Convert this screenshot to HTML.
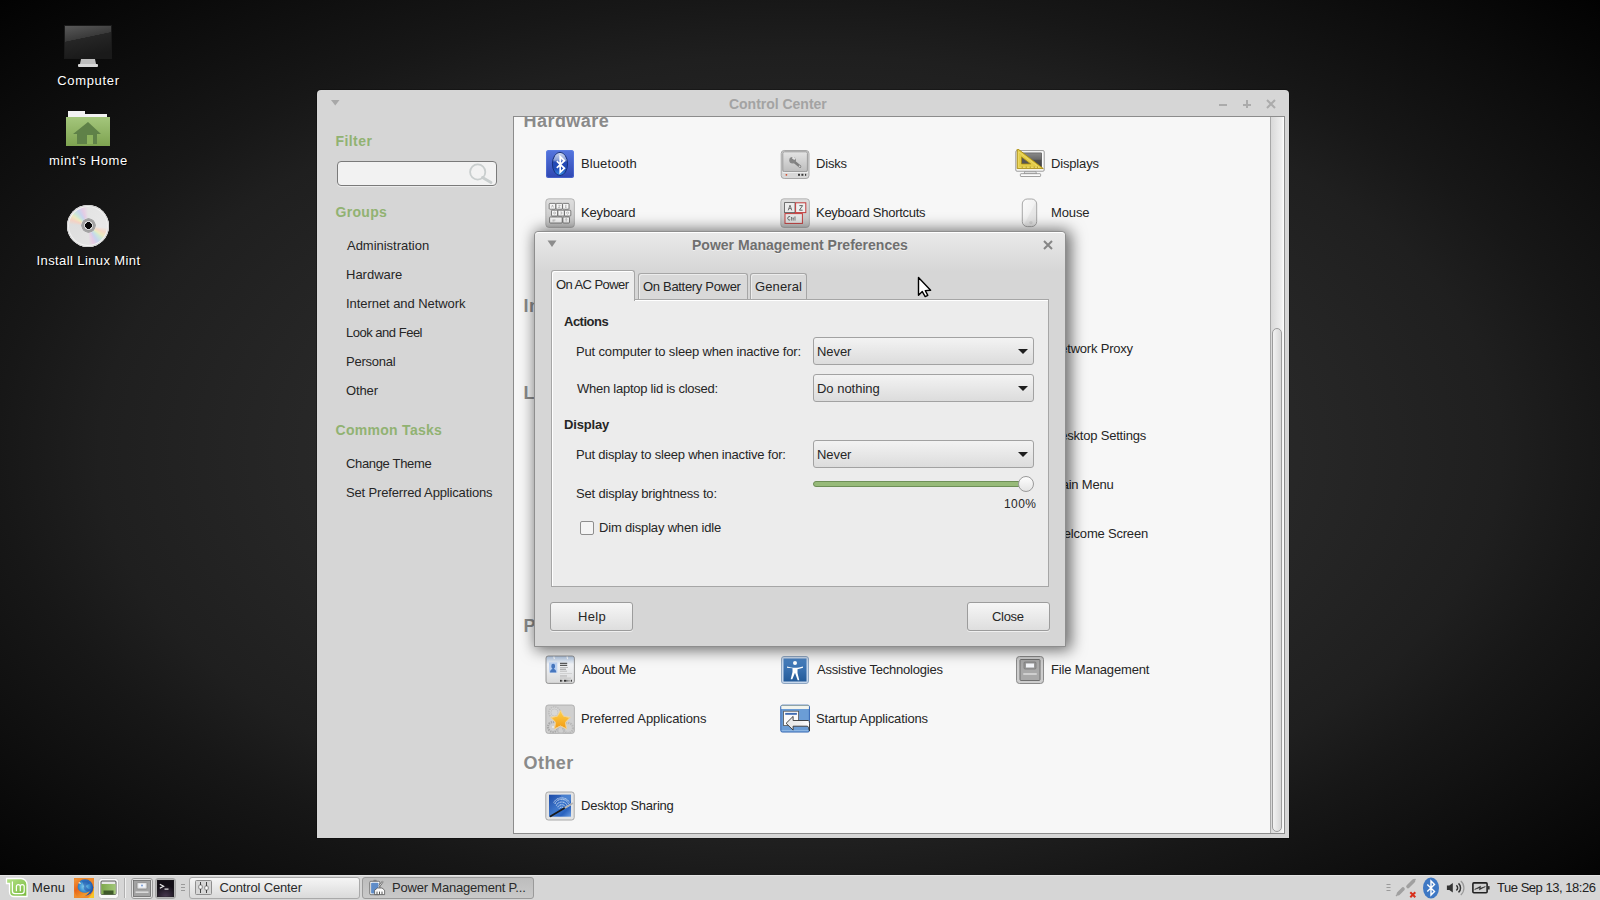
<!DOCTYPE html>
<html><head><meta charset="utf-8">
<style>
*{box-sizing:border-box;margin:0;padding:0}
html,body{width:1600px;height:900px;overflow:hidden}
body{position:relative;font-family:"Liberation Sans",sans-serif;font-size:13px;color:#2b2b2b;
background:radial-gradient(ellipse farthest-corner at 800px 450px,#2e2e2e 0%,#2a2a2a 35%,#272727 44%,#1f1f1f 62%,#171717 71%,#0d0d0d 85%,#020202 100%);}
.a{position:absolute}
.t{position:absolute;white-space:nowrap;line-height:1;letter-spacing:-0.2px;color:#262626}
.dl{color:#fff;text-shadow:1px 1px 1px #000;text-align:center;width:160px;letter-spacing:0.3px}
#cc{left:317px;top:90px;width:972px;height:748px;background:#d6d6d6;border-radius:4px 4px 0 0;box-shadow:0 0 0 1px rgba(0,0,0,.25)}
#frame{left:513px;top:116px;width:772px;height:718px;background:#f7f7f7;border:1px solid #8c8c8c;overflow:hidden}
#fin{position:absolute;left:-514px;top:-117px;width:1600px;height:900px}
.hd{font-weight:bold;color:#8a8a8a;letter-spacing:0}
.ic{position:absolute;width:30px;height:30px}
.sg{font-weight:bold;color:#91b272;letter-spacing:0}
.b{font-weight:bold;letter-spacing:0}
#dlg{left:534px;top:231px;width:532px;height:416px;background:#d6d6d6;border:1px solid #8e8e8e;border-radius:4px 4px 0 0;
box-shadow:3px 1px 15px 2px rgba(0,0,0,0.58)}
#dtitle{left:0;top:0;width:530px;height:40px;border-radius:4px 4px 0 0;background:linear-gradient(#e9e9e9,#d6d6d6);border-top:1px solid #fff}
.btn{position:absolute;border:1px solid #9c9c9c;border-radius:3px;background:linear-gradient(#f6f6f6,#dedede);box-shadow:0 1px 0 rgba(255,255,255,.6)}
.combo{position:absolute;left:813px;width:221px;height:28px;border:1px solid #a2a2a2;border-radius:3px;background:linear-gradient(#f3f3f3,#dcdcdc)}
.arr{position:absolute;width:0;height:0;border-left:5px solid transparent;border-right:5px solid transparent;border-top:5px solid #1e1e1e}
.tab{position:absolute;border:1px solid #a6a6a6;border-bottom:none;border-radius:3px 3px 0 0;background:#d9d9d9;box-shadow:inset 1px 1px 0 rgba(255,255,255,.5)}
#panel{left:0;top:875px;width:1600px;height:25px;background:#d6d6d6;border-top:1px solid #e4e4e4}
.pb{position:absolute;top:877px;height:22px;border:1px solid #a9a9a9;border-radius:3px;background:linear-gradient(#f5f5f5,#dadada)}

</style></head><body>
<svg width="0" height="0" style="position:absolute">
<defs>
 <linearGradient id="gGray" x1="0" y1="0" x2="0" y2="1"><stop offset="0" stop-color="#e4e4e4"/><stop offset="1" stop-color="#bdbdbd"/></linearGradient>
 <linearGradient id="gGray2" x1="0" y1="0" x2="0" y2="1"><stop offset="0" stop-color="#dedede"/><stop offset="1" stop-color="#c4c4c4"/></linearGradient>
 <linearGradient id="gBlue" x1="0" y1="0" x2="0" y2="1"><stop offset="0" stop-color="#5576de"/><stop offset="1" stop-color="#2f47b2"/></linearGradient>
 <linearGradient id="gOval" x1="0" y1="0" x2="0" y2="1"><stop offset="0" stop-color="#d2dcf0"/><stop offset="0.33" stop-color="#8aa0d8"/><stop offset="0.42" stop-color="#2448b4"/><stop offset="0.7" stop-color="#1f4ab8"/><stop offset="1" stop-color="#3a90e6"/></linearGradient>
 <linearGradient id="gAcc" x1="0" y1="0" x2="0" y2="1"><stop offset="0" stop-color="#4a82c2"/><stop offset="1" stop-color="#245b99"/></linearGradient>
 <linearGradient id="gCard" x1="0" y1="0" x2="0" y2="1"><stop offset="0" stop-color="#b3c9e6"/><stop offset="0.3" stop-color="#f2f4f7"/><stop offset="1" stop-color="#d9d9d9"/></linearGradient>
 <linearGradient id="gStar" x1="0" y1="0" x2="0" y2="1"><stop offset="0" stop-color="#ffd34d"/><stop offset="1" stop-color="#f29a12"/></linearGradient>
 <linearGradient id="gScr" x1="0" y1="0" x2="0" y2="1"><stop offset="0" stop-color="#8a8a8a"/><stop offset="0.45" stop-color="#6a6a6a"/><stop offset="0.5" stop-color="#505050"/><stop offset="1" stop-color="#444"/></linearGradient>
 <linearGradient id="gDS" x1="0" y1="0" x2="0" y2="1"><stop offset="0" stop-color="#5a8ad8"/><stop offset="1" stop-color="#1e4fae"/></linearGradient>

 <symbol id="i-bt" viewBox="0 0 30 30">
  <rect x="1" y="1" width="28" height="28" rx="2.5" fill="url(#gBlue)"/>
  <rect x="1.5" y="1.5" width="27" height="27" rx="2" fill="none" stroke="#6e8ef0" stroke-width="0.6" opacity=".6"/>
  <ellipse cx="15" cy="14.9" rx="7.6" ry="11.6" fill="url(#gOval)" stroke="#16307c" stroke-width="1"/>
  <path d="M11.8 12.2L19.4 19.3L15.2 23.3V7.6L19.4 11.7L11.8 18.8" fill="none" stroke="#fff" stroke-width="1.7" stroke-linejoin="miter"/>
 </symbol>
 <symbol id="i-disk" viewBox="0 0 30 30">
  <rect x="1.2" y="1.5" width="27.8" height="28" rx="3" fill="#d8d8d8" stroke="#a0a0a0" stroke-width="0.9"/>
  <rect x="2.8" y="2.8" width="24.6" height="19.8" rx="1.5" fill="url(#gGray)" stroke="#959595" stroke-width="0.9"/>
  <path d="M14.5 13L20 17.6" stroke="#7e7e7e" stroke-width="2.6" stroke-linecap="round"/>
  <circle cx="12.6" cy="11.2" r="3.3" fill="#858585"/>
  <path d="M12.8 7.2L15.8 9.6L14.4 11L12 9.6z" fill="#e2e2e2"/>
  <ellipse cx="19.6" cy="17.3" rx="1" ry="0.6" fill="#ddd" transform="rotate(40 19.6 17.3)"/>
  <rect x="2.5" y="23.2" width="25.5" height="0.8" fill="#f4f4f4"/>
  <circle cx="6.4" cy="25.8" r="0.9" fill="#d04a2a"/>
  <rect x="18" y="24.8" width="2" height="2" fill="#3a3a3a"/><rect x="21.4" y="24.8" width="2" height="2" fill="#3a3a3a"/><rect x="25" y="24.8" width="1.2" height="2" fill="#3a3a3a"/>
 </symbol>
 <symbol id="i-disp" viewBox="0 0 30 30">
  <path d="M10 22h10.5l1.2 2.8H9z" fill="#dedede" stroke="#888" stroke-width="0.7"/>
  <rect x="5.4" y="24.7" width="20.2" height="2.8" rx="0.6" fill="#fbfbfb" stroke="#8a8a8a" stroke-width="0.8"/>
  <rect x="0.8" y="1.6" width="28.4" height="20.6" rx="1.2" fill="#fdfdfd" stroke="#8e8e8e" stroke-width="0.9"/>
  <rect x="3.5" y="3.9" width="23.2" height="14.3" fill="url(#gScr)" stroke="#3a3a3a" stroke-width="0.5"/>
  <path d="M2.2 -0.6V19.6H28.3z" fill="#e3cc48" stroke="#a88a10" stroke-width="0.9"/>
  <path d="M3.6 2.8V18.4H24.3z" fill="none" stroke="#f4e27a" stroke-width="0.6"/>
  <path d="M6.5 7.9V14.9H15.7z" fill="#565656" stroke="#a88a10" stroke-width="0.8"/>
  <g fill="#8a7010"><rect x="6.8" y="17.6" width="0.7" height="1.2"/><rect x="10.8" y="17.6" width="0.7" height="1.2"/><rect x="14.8" y="17.6" width="0.7" height="1.2"/><rect x="18.8" y="17.6" width="0.7" height="1.2"/><rect x="22" y="17.6" width="0.7" height="1.2"/></g>
 </symbol>
 <symbol id="i-kbd" viewBox="0 0 30 30">
  <rect x="0.8" y="0.8" width="28.6" height="28.6" rx="3" fill="url(#gGray2)" stroke="#a8a8a8" stroke-width="0.8"/>
  <g fill="#f6f6f6" stroke="#505050" stroke-width="0.7">
   <rect x="4.2" y="5.4" width="6.6" height="5.8" rx="0.8"/><rect x="11" y="5.4" width="6.4" height="5.8" rx="0.8"/><rect x="17.6" y="5.4" width="6.4" height="5.8" rx="0.8"/>
   <rect x="6.5" y="12.2" width="6.2" height="5.8" rx="0.8"/><rect x="12.9" y="12.2" width="6.4" height="5.8" rx="0.8"/><rect x="19.5" y="12.2" width="6.3" height="5.8" rx="0.8"/>
   <rect x="4.6" y="19" width="12.6" height="6" rx="0.8"/><rect x="17.9" y="19" width="6.6" height="6" rx="0.8"/>
  </g>
  <g fill="none" stroke="#888" stroke-width="0.5">
   <path d="M6.5 9.5l1-2.5 1 2.5M13.3 7.3h2l-2 2.2h2M20 7.3h1.6M20 8.4h1.4M20 9.5h1.6"/>
   <circle cx="9.6" cy="15" r="1"/><path d="M15.3 14h1.5v2h-1.5M22.6 14a1 1 0 1 0 .01 0"/>
   <path d="M7.5 22h3M7.5 23h2"/><path d="M21.2 20.5v3M20.3 21.5l.9-.9.9.9"/>
  </g>
 </symbol>
 <symbol id="i-ksc" viewBox="0 0 30 30">
  <rect x="0.8" y="0.8" width="28.6" height="28.6" rx="3" fill="url(#gGray2)" stroke="#a8a8a8" stroke-width="0.8"/>
  <rect x="4.6" y="4.6" width="10.4" height="10" fill="#ececec" stroke="#555" stroke-width="0.8"/>
  <rect x="15.6" y="4.8" width="10.2" height="9.8" fill="#eef0f0" stroke="#c43c3c" stroke-width="1"/>
  <rect x="5" y="15.6" width="17.4" height="9.8" fill="#e6e8e8" stroke="#c43c3c" stroke-width="1"/>
  <path d="M8.2 12.4l1.8-5.2 1.8 5.2M8.9 10.6h2.2" fill="none" stroke="#555" stroke-width="0.8"/>
  <path d="M19.4 7.6h3.2l-3.2 4.6h3.2" fill="none" stroke="#555" stroke-width="0.9"/>
  <path d="M10.2 18.8a1.6 1.8 0 1 0 0 3" fill="none" stroke="#555" stroke-width="0.9"/>
  <path d="M11.6 19v3.6M11.2 19.8h1M13.2 19.8v2.8M13.2 20.4q.4-.7 1-.6M15 18.4v4.2" fill="none" stroke="#555" stroke-width="0.7"/>
 </symbol>
 <symbol id="i-mouse" viewBox="0 0 30 30">
  <defs><linearGradient id="gMouse" x1="0" y1="0" x2="1" y2="1"><stop offset="0" stop-color="#fbfbfb"/><stop offset="0.5" stop-color="#f2f2f2"/><stop offset="0.55" stop-color="#e8e8e8"/><stop offset="1" stop-color="#e2e2e2"/></linearGradient></defs>
  <rect x="7.3" y="1" width="14.4" height="27.6" rx="5" fill="url(#gMouse)" stroke="#9e9e9e" stroke-width="0.9"/>
  <circle cx="15.9" cy="24.6" r="1.7" fill="#d4d4d4"/>
 </symbol>
 <symbol id="i-about" viewBox="0 0 30 30">
  <rect x="1" y="1" width="28.4" height="27.4" rx="2.2" fill="url(#gCard)" stroke="#8a8a8a" stroke-width="0.9"/>
  <path d="M8.8 1.6l.6 2.6M22 1.6l.6 2.6" stroke="#fff" stroke-width="1.1"/>
  <rect x="4" y="7.4" width="8.3" height="10.2" fill="#bcd2f2"/>
  <path d="M5 17.6c0-2.6 1.4-3.2 2.6-3.6-1-.8-1.3-1.8-1.3-3a1.9 2.2 0 0 1 3.8 0c0 1.2-.3 2.2-1.3 3 1.2.4 2.5 1 2.5 3.6z" fill="#4676be"/>
  <g fill="#333"><rect x="15" y="7.8" width="7.2" height="1"/><rect x="15" y="9.8" width="7.2" height="1"/></g>
  <g fill="#999"><rect x="15" y="12" width="8" height="0.6"/><rect x="15" y="13.8" width="6" height="0.7" fill="#777"/><rect x="15" y="15.8" width="7" height="0.6"/></g>
  <rect x="15" y="18.2" width="12" height="0.5" fill="#bbb"/>
  <g fill="#aaa"><rect x="15" y="20.3" width="7" height="0.5"/><rect x="15" y="21.6" width="7" height="0.5"/><rect x="15" y="22.8" width="11" height="0.5"/></g>
  <g fill="#333"><rect x="15" y="24.8" width="1.8" height="1.9"/><rect x="17.4" y="24.8" width="0.8" height="1.9" fill="#888"/><rect x="19" y="24.8" width="2.6" height="1.9"/><rect x="22.2" y="24.8" width="1.4" height="1.9" fill="#777"/><rect x="24.2" y="24.8" width="0.9" height="1.9" fill="#999"/><rect x="25.8" y="24.8" width="1.1" height="1.9"/></g>
 </symbol>
 <symbol id="i-acc" viewBox="0 0 30 30">
  <rect x="1.5" y="1.5" width="27" height="27" rx="2.5" fill="#c8d8ec" stroke="#8ea6c2"/>
  <rect x="3.5" y="3.5" width="23" height="23" fill="url(#gAcc)"/>
  <circle cx="15" cy="8" r="2" fill="#fff"/>
  <path d="M7 11.5c3 1 5 1.2 8 1.2s5-.2 8-1.2v1.2l-5.5 1.5v3.8l1.8 7.3h-1.6L15 17.8l-2.7 6.5h-1.6l1.8-7.3v-3.8L7 12.7z" fill="#fff"/>
 </symbol>
 <symbol id="i-file" viewBox="0 0 30 30">
  <rect x="1.5" y="1.5" width="27" height="27" rx="3" fill="#cdcdcd" stroke="#8a8a8a"/>
  <rect x="5" y="4.5" width="20" height="21" rx="1" fill="#a9a9a9" stroke="#707070"/>
  <rect x="9" y="7" width="12" height="7" rx="1" fill="#9a9a9a" stroke="#777" stroke-width="0.7"/>
  <rect x="11" y="8.5" width="8" height="4" fill="#f4f6fa"/>
  <rect x="8" y="18" width="14" height="2" rx="1" fill="#cfcfcf"/>
 </symbol>
 <symbol id="i-pref" viewBox="0 0 30 30">
  <rect x="0.8" y="1" width="28.6" height="28.4" rx="2.5" fill="#cfcfcf" stroke="#a6a6a6" stroke-width="0.8"/>
  <circle cx="9.5" cy="8.5" r="5.6" fill="#d8d8d8" stroke="#bdbdbd" stroke-width="1.6" stroke-dasharray="1.4 0.8"/>
  <circle cx="9.5" cy="8.5" r="3.6" fill="none" stroke="#c2c2c2" stroke-width="0.8"/>
  <circle cx="8" cy="23" r="5" fill="none" stroke="#a8a8a8" stroke-width="2.2" stroke-dasharray="1.4 0.9"/>
  <circle cx="8" cy="23" r="1" fill="#eee"/>
  <circle cx="23" cy="24" r="5" fill="none" stroke="#b8b8b8" stroke-width="2.2" stroke-dasharray="1.4 0.9"/>
  <circle cx="16" cy="26" r="3.5" fill="none" stroke="#bcbcbc" stroke-width="1.6"/>
  <path d="M15.5 6.4L18.7 12.2L25.2 13.4L20.6 18.3L21.5 24.9L15.5 22.0L9.5 24.9L10.4 18.3L5.8 13.4L12.3 12.2z" fill="url(#gStar)" stroke="#fff6e0" stroke-width="1" stroke-linejoin="round"/>
  <path d="M15.5 6.4L18.7 12.2L25.2 13.4L20.6 18.3L21.5 24.9L15.5 22.0L9.5 24.9L10.4 18.3L5.8 13.4L12.3 12.2z" fill="none" stroke="#d89a20" stroke-width="0.4" stroke-linejoin="round"/>
 </symbol>
 <symbol id="i-start" viewBox="0 0 30 30">
  <defs><linearGradient id="gArr" x1="0" y1="0" x2="1" y2="0"><stop offset="0" stop-color="#e6e6e6"/><stop offset="0.6" stop-color="#f0f0f0"/><stop offset="1" stop-color="#fff"/></linearGradient></defs>
  <rect x="0.8" y="1.2" width="28.6" height="26.8" rx="1.5" fill="#6b9dd6" stroke="#2f62b0" stroke-width="1"/>
  <rect x="1.3" y="1.6" width="27.6" height="3.4" fill="#f2f4ee"/>
  <rect x="1.3" y="1.2" width="27.6" height="0.6" fill="#8fa08a"/>
  <rect x="1.6" y="26.4" width="27" height="0.8" fill="#a8c8ec"/>
  <rect x="3.6" y="7.2" width="15" height="14.4" fill="#fbfbfb" stroke="#555" stroke-width="0.8"/>
  <rect x="5.2" y="8.9" width="11.7" height="1.9" fill="#3f6cb2"/>
  <path d="M6.1 19.3L13.1 12.4V16.5H28.4Q29.5 17 29.5 19.5V27Q28.5 22.2 27.5 22.2H13.1V26.1Z" fill="url(#gArr)" stroke="#333" stroke-width="0.9" stroke-linejoin="round"/>
 </symbol>
 <symbol id="i-ds" viewBox="0 0 30 30">
  <defs><linearGradient id="gDS2" x1="0" y1="0" x2="1" y2="1"><stop offset="0" stop-color="#1c4aa6"/><stop offset="0.5" stop-color="#3f78cc"/><stop offset="0.75" stop-color="#2a62be"/><stop offset="1" stop-color="#6a9ce0"/></linearGradient></defs>
  <rect x="0.8" y="1" width="28.4" height="28" rx="2.5" fill="#e4e4e4" stroke="#a0a0a0" stroke-width="0.9"/>
  <rect x="4" y="3.7" width="22" height="22" fill="url(#gDS2)"/>
  <rect x="16" y="3.7" width="10" height="6" fill="#5a90d8" opacity=".5"/>
  <g fill="none" stroke="#e8f0fb" stroke-width="0.9" stroke-dasharray="1.1 0.5">
   <path d="M8.8 11.5a8.3 7 0 0 1 15.6 0"/><path d="M10 13a6.8 5.6 0 0 1 13.4 0"/><path d="M11.4 14.6a5.4 4.4 0 0 1 10.6 0"/><path d="M12.8 16.2a4 3.2 0 0 1 7.8 0"/><path d="M14.2 17.6a2.6 2 0 0 1 5 0"/>
  </g>
  <path d="M5.6 25.3L20.5 16.5" stroke="#1a1a1a" stroke-width="1.8" stroke-linecap="round"/>
  <path d="M20.5 16.5L27.6 12.4" stroke="#c8c8c8" stroke-width="2" stroke-linecap="round"/>
  <path d="M20.5 16.5L27.6 12.4" stroke="#888" stroke-width="0.5"/>
 </symbol>
</defs>
</svg>

<!-- Desktop icons -->
<svg class="a" style="left:63px;top:24px" width="50" height="45" viewBox="0 0 50 45">
 <defs><linearGradient id="scr" x1="0" y1="0" x2="0.3" y2="1"><stop offset="0" stop-color="#5a5a5a"/><stop offset="0.45" stop-color="#3a3a3a"/><stop offset="0.46" stop-color="#262626"/><stop offset="1" stop-color="#1a1a1a"/></linearGradient></defs>
 <rect x="1.5" y="1.5" width="47" height="33" fill="url(#scr)" stroke="#1a1a1a"/>
 <path d="M18 35h14l1 5H17z" fill="#bdbdbd"/><rect x="15" y="40" width="20" height="3" rx="1" fill="#d8d8d8"/>
</svg>
<div class="t dl" style="left:8.5px;top:74px;font-size:13px;letter-spacing:0.69px;">Computer</div>

<svg class="a" style="left:65px;top:110px" width="46" height="37" viewBox="0 0 46 37">
 <defs><linearGradient id="fold" x1="0" y1="0" x2="0" y2="1"><stop offset="0" stop-color="#a4c67c"/><stop offset="1" stop-color="#7ea350"/></linearGradient></defs>
 <path d="M3 1h17v3h22v4H3z" fill="#f2f2f2"/>
 <rect x="1" y="7" width="44" height="29" fill="url(#fold)"/>
 <path d="M23 12L8 24h4v10h20V24h4z" fill="#5f8148"/><rect x="22" y="25" width="6" height="9" fill="#8db35e"/>
</svg>
<div class="t dl" style="left:8.5px;top:154px;font-size:13px;letter-spacing:0.64px;">mint's Home</div>

<div class="a" style="left:67px;top:205px;width:42px;height:42px;border-radius:50%;background:conic-gradient(#e4e4e4 0deg,#e8e8e8 95deg,#f4d8c8 110deg,#eeeac0 122deg,#cde8d8 133deg,#c8d4ee 148deg,#e6cce4 162deg,#e2e2e2 178deg,#dedede 275deg,#f4d2c4 290deg,#eeeac0 303deg,#cde8d8 314deg,#c8d4ee 328deg,#e6cce4 343deg,#e4e4e4 360deg);box-shadow:inset 0 0 0 1px #cfcfcf,inset 0 0 0 2px #f2f2f2"></div>
<div class="a" style="left:80.5px;top:218.2px;width:15px;height:15px;border-radius:50%;background:radial-gradient(circle,#0a0a0a 0,#0a0a0a 3.2px,#d8d8d8 3.6px,#d8d8d8 4.2px,#9c9c9c 4.6px,#a8a8a8 7px,#e8e8e8 7.5px)"></div>
<div class="t dl" style="left:8.5px;top:254px;font-size:13px;letter-spacing:0.39px;">Install Linux Mint</div>

<!-- Control Center window -->
<div id="cc" class="a"></div>
<svg class="a" style="left:331px;top:100px" width="9" height="6"><path d="M0 0h8.5L4.25 5.5z" fill="#a8a8a8"/></svg>
<div class="t b" style="left:729px;top:97.1px;font-size:14px;letter-spacing:-0.02px;color:#a3a3a3">Control Center</div>
<svg class="a" style="left:1216px;top:97px" width="64" height="14">
 <rect x="3" y="7" width="8" height="2" fill="#ababab"/>
 <rect x="27" y="7" width="8" height="2" fill="#ababab"/><rect x="30" y="3" width="2" height="8" fill="#ababab"/>
 <path d="M51 3l8 8M59 3l-8 8" stroke="#ababab" stroke-width="2"/>
</svg>

<div class="t sg" style="left:335.5px;top:134.1px;font-size:14px;letter-spacing:0.42px;">Filter</div>
<div class="a" style="left:337px;top:161px;width:160px;height:25px;border:1px solid #7a7a7a;border-radius:4px;background:#f2f2f2;box-shadow:0 1px 0 rgba(255,255,255,.5)"></div>
<svg class="a" style="left:466px;top:163px" width="28" height="22"><circle cx="11.7" cy="9" r="7.6" fill="none" stroke="#c9cece" stroke-width="1.8"/><path d="M16.5 14.5l8.5 5" stroke="#c9cece" stroke-width="2.8" stroke-linecap="round"/></svg>
<div class="t sg" style="left:335.5px;top:205.1px;font-size:14px;letter-spacing:0.3px;">Groups</div>
<div class="t " style="left:347px;top:239px;font-size:13px;letter-spacing:-0.02px;">Administration</div>
<div class="t " style="left:346px;top:268px;font-size:13px;letter-spacing:0.0px;">Hardware</div>
<div class="t " style="left:346px;top:297px;font-size:13px;letter-spacing:-0.06px;">Internet and Network</div>
<div class="t " style="left:346px;top:326px;font-size:13px;letter-spacing:-0.49px;">Look and Feel</div>
<div class="t " style="left:346px;top:355px;font-size:13px;letter-spacing:-0.23px;">Personal</div>
<div class="t " style="left:346px;top:384px;font-size:13px;letter-spacing:-0.12px;">Other</div>
<div class="t sg" style="left:335.5px;top:423.1px;font-size:14px;letter-spacing:0.29px;">Common Tasks</div>
<div class="t " style="left:346px;top:457px;font-size:13px;letter-spacing:-0.34px;">Change Theme</div>
<div class="t " style="left:346px;top:486px;font-size:13px;letter-spacing:-0.15px;">Set Preferred Applications</div>

<div id="frame" class="a"><div id="fin">
<div class="t hd" style="left:523.5px;top:111.8px;font-size:18px;letter-spacing:0.46px;">Hardware</div>
<svg class="ic" style="left:545px;top:149px"><use href="#i-bt"/></svg><div class="t " style="left:581px;top:157px;font-size:13px;letter-spacing:0.11px;">Bluetooth</div>
<svg class="ic" style="left:780px;top:149px"><use href="#i-disk"/></svg><div class="t " style="left:816px;top:157px;font-size:13px;letter-spacing:-0.2px;">Disks</div>
<svg class="ic" style="left:1015px;top:149px"><use href="#i-disp"/></svg><div class="t " style="left:1051px;top:157px;font-size:13px;letter-spacing:-0.16px;">Displays</div>
<svg class="ic" style="left:545px;top:198px"><use href="#i-kbd"/></svg><div class="t " style="left:581px;top:206px;font-size:13px;letter-spacing:-0.17px;">Keyboard</div>
<svg class="ic" style="left:780px;top:198px"><use href="#i-ksc"/></svg><div class="t " style="left:816px;top:206px;font-size:13px;letter-spacing:-0.27px;">Keyboard Shortcuts</div>
<svg class="ic" style="left:1015px;top:198px"><use href="#i-mouse"/></svg><div class="t " style="left:1051px;top:206px;font-size:13px;letter-spacing:-0.12px;">Mouse</div>
<div class="t hd" style="left:523.5px;top:296.8px;font-size:18px;letter-spacing:0.45px;">Internet and Network</div>
<div class="t " style="left:1051px;top:342px;font-size:13px;letter-spacing:-0.2px;">Network Proxy</div>
<div class="t hd" style="left:523.5px;top:383.8px;font-size:18px;letter-spacing:0.45px;">Look and Feel</div>
<div class="t " style="left:1051px;top:429px;font-size:13px;letter-spacing:-0.2px;">Desktop Settings</div>
<div class="t " style="left:1051px;top:478px;font-size:13px;letter-spacing:-0.2px;">Main Menu</div>
<div class="t " style="left:1052px;top:527px;font-size:13px;letter-spacing:-0.2px;">Welcome Screen</div>
<div class="t hd" style="left:523.5px;top:616.8px;font-size:18px;letter-spacing:0.45px;">Personal</div>
<svg class="ic" style="left:545px;top:655px"><use href="#i-about"/></svg><div class="t " style="left:582px;top:663px;font-size:13px;letter-spacing:-0.2px;">About Me</div>
<svg class="ic" style="left:780px;top:655px"><use href="#i-acc"/></svg><div class="t " style="left:817px;top:663px;font-size:13px;letter-spacing:-0.22px;">Assistive Technologies</div>
<svg class="ic" style="left:1015px;top:655px"><use href="#i-file"/></svg><div class="t " style="left:1051px;top:663px;font-size:13px;letter-spacing:-0.14px;">File Management</div>
<svg class="ic" style="left:545px;top:704px"><use href="#i-pref"/></svg><div class="t " style="left:581px;top:712px;font-size:13px;letter-spacing:-0.08px;">Preferred Applications</div>
<svg class="ic" style="left:780px;top:704px"><use href="#i-start"/></svg><div class="t " style="left:816px;top:712px;font-size:13px;letter-spacing:-0.15px;">Startup Applications</div>
<div class="t hd" style="left:523.5px;top:753.8px;font-size:18px;letter-spacing:0.45px;">Other</div>
<svg class="ic" style="left:545px;top:790px;overflow:visible"><use href="#i-ds" y="1"/></svg><div class="t " style="left:581px;top:799px;font-size:13px;letter-spacing:-0.24px;">Desktop Sharing</div>
<!-- scrollbar -->
<div class="a" style="left:1270px;top:117px;width:14px;height:716px;border-left:1px solid #a8a8a8;background:linear-gradient(90deg,#d9d9d9,#efefef 80%,#fff)"></div>
<div class="a" style="left:1272px;top:328px;width:10px;height:504px;border:1px solid #9c9c9c;border-radius:5px;background:linear-gradient(90deg,#f2f2f2,#d8d8d8)"></div>
</div></div>

<!-- Dialog -->
<div id="dlg" class="a"><div id="dtitle" class="a"></div></div>
<svg class="a" style="left:547px;top:240px" width="10" height="8"><path d="M0.5 0.5h9L5 7z" fill="#8c8c8c"/></svg>
<div class="t b" style="left:692px;top:238.1px;font-size:14px;letter-spacing:0.01px;color:#6f6f6f;text-shadow:0 1px 0 rgba(255,255,255,.5)">Power Management Preferences</div>
<svg class="a" style="left:1042px;top:239px" width="12" height="12"><path d="M2 2l8 8M10 2l-8 8" stroke="#858585" stroke-width="2"/></svg>

<!-- notebook page -->
<div class="a" style="left:551px;top:299px;width:498px;height:288px;background:#ececec;border:1px solid #a6a6a6;box-shadow:inset 1px 1px 0 #fff"></div>
<div class="tab" style="left:638px;top:273px;width:110px;height:26px"></div>
<div class="tab" style="left:750px;top:273px;width:57px;height:26px"></div>
<div class="tab" style="left:551px;top:270px;width:84px;height:31px;background:#ececec;box-shadow:inset 1px 1px 0 #fff"></div>
<div class="t " style="left:556px;top:278px;font-size:13px;letter-spacing:-0.58px;">On AC Power</div>
<div class="t " style="left:643px;top:280px;font-size:13px;letter-spacing:-0.31px;">On Battery Power</div>
<div class="t " style="left:755px;top:280px;font-size:13px;letter-spacing:0.12px;">General</div>

<div class="t b" style="left:564px;top:315px;font-size:13px;letter-spacing:-0.5px;">Actions</div>
<div class="t " style="left:576px;top:345px;font-size:13px;letter-spacing:-0.16px;">Put computer to sleep when inactive for:</div>
<div class="combo" style="top:337px"><div class="arr" style="left:204px;top:11px"></div></div>
<div class="t " style="left:817px;top:345px;font-size:13px;letter-spacing:-0.07px;">Never</div>
<div class="t " style="left:577px;top:382px;font-size:13px;letter-spacing:-0.25px;">When laptop lid is closed:</div>
<div class="combo" style="top:374px"><div class="arr" style="left:204px;top:11px"></div></div>
<div class="t " style="left:817px;top:382px;font-size:13px;letter-spacing:-0.02px;">Do nothing</div>
<div class="t b" style="left:564px;top:418px;font-size:13px;letter-spacing:-0.17px;">Display</div>
<div class="t " style="left:576px;top:448px;font-size:13px;letter-spacing:-0.2px;">Put display to sleep when inactive for:</div>
<div class="combo" style="top:440px"><div class="arr" style="left:204px;top:11px"></div></div>
<div class="t " style="left:817px;top:448px;font-size:13px;letter-spacing:-0.07px;">Never</div>
<div class="t " style="left:576px;top:486.5px;font-size:13px;letter-spacing:-0.17px;">Set display brightness to:</div>
<div class="a" style="left:813px;top:481px;width:214px;height:6px;border:1px solid #6e8f57;border-radius:3px;background:#97ba79"></div>
<div class="a" style="left:1018px;top:476px;width:16px;height:16px;border:1px solid #9a9a9a;border-radius:50%;background:linear-gradient(#fdfdfd,#e4e4e4)"></div>
<div class="t " style="left:1004px;top:497.8px;font-size:12px;letter-spacing:0.43px;">100%</div>
<div class="a" style="left:580px;top:521px;width:14px;height:14px;border:1px solid #8e8e8e;border-radius:2px;background:#f4f4f4"></div>
<div class="t " style="left:599px;top:520.5px;font-size:13px;letter-spacing:-0.18px;">Dim display when idle</div>

<div class="btn" style="left:550px;top:602px;width:83px;height:29px"></div>
<div class="t " style="left:578px;top:610px;font-size:13px;letter-spacing:0.3px;">Help</div>
<div class="btn" style="left:967px;top:602px;width:83px;height:29px"></div>
<div class="t " style="left:992px;top:610px;font-size:13px;letter-spacing:-0.3px;">Close</div>

<!-- cursor -->
<svg class="a" style="left:917px;top:276px" width="16" height="22" viewBox="0 0 16 22"><path d="M1.5 1.5V19.3L5.3 15.6L8.2 20.6L10.8 19.4L8.3 14.6L13.6 14.2Z" fill="#fff" stroke="#000" stroke-width="1.4" stroke-linejoin="round"/></svg>

<!-- Panel -->
<div id="panel" class="a"></div>
<svg class="a" style="left:5px;top:877px" width="24" height="21" viewBox="0 0 24 21">
 <defs><linearGradient id="gMint" x1="0" y1="0" x2="1" y2="1"><stop offset="0" stop-color="#b6e38a"/><stop offset="1" stop-color="#76b83a"/></linearGradient></defs>
 <path d="M1.5 1.5H16a6 6 0 0 1 6 6V19.5H9a4.5 4.5 0 0 1-4.5-4.5V6.5H1.5z" fill="url(#gMint)" stroke="#fff" stroke-width="1.3"/>
 <path d="M7.4 4.6V14q0 2.6 2.6 2.6H16.6q2.6 0 2.6-2.6V9.6M11.4 14.2V9.6a1.95 1.95 0 0 1 3.9 0V14.2M15.3 9.6a1.95 1.95 0 0 1 3.9 0" fill="none" stroke="#fff" stroke-width="1.2"/>
</svg>
<div class="t " style="left:32px;top:880.5px;font-size:13px;letter-spacing:0.17px;color:#222">Menu</div>
<svg class="a" style="left:74px;top:878px" width="20" height="20" viewBox="0 0 20 20">
 <defs><radialGradient id="gFfg" cx="0.45" cy="0.45" r="0.6"><stop offset="0" stop-color="#8ad6f0"/><stop offset="0.5" stop-color="#3a8fd0"/><stop offset="1" stop-color="#1a3f9a"/></radialGradient>
 <linearGradient id="gFfo" x1="0" y1="0" x2="0.6" y2="1"><stop offset="0" stop-color="#f39a3a"/><stop offset="0.5" stop-color="#e8641a"/><stop offset="1" stop-color="#f0a030"/></linearGradient></defs>
 <rect x="0" y="0" width="20" height="20" fill="#ef8a2c"/>
 <path d="M20 0V20H14C18 17 20 13 20 9z" fill="#f7c528"/>
 <circle cx="11" cy="9.5" r="8.3" fill="url(#gFfg)"/>
 <path d="M8 3C10 2 14 2 16 5C15 7 13 6 12 8C13 11 16 12 17 11C16 13 14 14 12 13C10 12 9 10 10 8z" fill="#1f4fa8" opacity=".55"/>
 <path d="M0 2C2 0 5 1 6 3C5 5 3 7 4 11C6 15 12 16 16 13C13 18 8 20 4 19C1 17 0 13 0 10z" fill="url(#gFfo)"/>
 <path d="M4 5l2 -1 1 2z" fill="#fff6d0"/>
</svg>
<svg class="a" style="left:98px;top:878px" width="21" height="21" viewBox="0 0 21 21">
 <defs><linearGradient id="gFm" x1="0" y1="0" x2="1" y2="0"><stop offset="0" stop-color="#7ea84c"/><stop offset="1" stop-color="#a2c77a"/></linearGradient></defs>
 <rect x="0.5" y="0.5" width="20" height="20" rx="3" fill="#fafafa" stroke="#c4c4c4"/>
 <rect x="3" y="3" width="15" height="13.5" rx="1" fill="#e8e8e8" stroke="#333" stroke-width="0.8"/>
 <rect x="3.3" y="6" width="14.4" height="10.3" fill="url(#gFm)"/>
 <rect x="5.5" y="12.5" width="10" height="4" fill="#3f5a2a"/>
</svg>
<div class="a" style="left:124px;top:878px;width:2px;height:20px;border-left:1px solid #b0b0b0;border-right:1px solid #f0f0f0"></div>
<svg class="a" style="left:131px;top:878px" width="22" height="21" viewBox="0 0 22 21">
 <rect x="0.5" y="0.5" width="21" height="20" rx="2.5" fill="#e2e2e2" stroke="#9c9c9c"/>
 <rect x="2.5" y="2.5" width="17" height="16" fill="#a2a2a2" stroke="#6a6a6a" stroke-width="0.8"/>
 <rect x="6" y="4.5" width="10" height="6.5" rx="1" fill="#dcdcdc" stroke="#888" stroke-width="0.7"/>
 <rect x="7.5" y="5.8" width="7" height="3.8" fill="#f2f4f8"/><circle cx="11" cy="7.6" r="1" fill="#7aa0d8"/>
 <rect x="4.5" y="13.5" width="13" height="1.3" fill="#e6e6e6"/>
</svg>
<svg class="a" style="left:155px;top:878px" width="21" height="21" viewBox="0 0 21 21">
 <defs><radialGradient id="gTerm" cx="0.5" cy="1" r="0.7"><stop offset="0" stop-color="#4a3a52"/><stop offset="1" stop-color="#120e16"/></radialGradient></defs>
 <rect x="0.5" y="0.5" width="20" height="20" rx="2.5" fill="#f2f2f2" stroke="#a6a6a6"/>
 <rect x="2" y="2" width="17" height="17" fill="url(#gTerm)" stroke="#222" stroke-width="0.6"/>
 <path d="M4.8 6.3l3.8 2-3.8 2" fill="none" stroke="#eee" stroke-width="1.2"/><rect x="9.5" y="10.5" width="4" height="1.2" fill="#eee"/>
</svg>
<svg class="a" style="left:180px;top:884px" width="6" height="10"><rect x="1" y="0" width="4" height="1" fill="#9a9a9a"/><rect x="1" y="3" width="4" height="1" fill="#9a9a9a"/><rect x="1" y="6" width="4" height="1" fill="#9a9a9a"/></svg>

<div class="pb" style="left:189px;width:171px"></div>
<svg class="a" style="left:195px;top:880px" width="17" height="15" viewBox="0 0 17 15">
 <rect x="0.5" y="0.5" width="16" height="14" rx="1" fill="#d6d6d6" stroke="#8e8e8e"/>
 <path d="M5.5 2v11M11.5 2v11" stroke="#333" stroke-width="0.9"/>
 <rect x="3.8" y="5" width="3.4" height="4" rx="1" fill="#fff" stroke="#444" stroke-width="0.6"/>
 <rect x="9.8" y="6" width="3.4" height="4" rx="1" fill="#fff" stroke="#444" stroke-width="0.6"/>
</svg>
<div class="t " style="left:219.5px;top:881px;font-size:13px;letter-spacing:-0.16px;color:#2a2a2a">Control Center</div>
<div class="pb" style="left:362px;width:172px;border-color:#9a9a9a;background:linear-gradient(#bdbdbd,#c9c9c9)"></div>
<svg class="a" style="left:364px;top:876px" width="26" height="22" viewBox="0 0 26 22">
 <rect x="10" y="4.2" width="2" height="1.4" fill="#eee" stroke="#555" stroke-width="0.6"/>
 <rect x="5.8" y="5.3" width="10" height="13.4" rx="1" fill="#fafafa" stroke="#555" stroke-width="0.8"/>
 <rect x="7.1" y="6.8" width="7.4" height="10.8" rx="0.8" fill="#5e8cc8"/>
 <path d="M15 10.5L19 5.2" stroke="#555" stroke-width="1.8"/><path d="M15 10.5L19 5.2" stroke="#eee" stroke-width="0.8"/>
 <path d="M10.6 18.6V14.2L13.5 12H18L20.6 14.2V18.6z" fill="#fafafa" stroke="#555" stroke-width="0.8"/>
 <path d="M13 18.4v-2.8M15.5 18.4v-2.8M18 18.4v-2.8" stroke="#555" stroke-width="1"/>
</svg>
<div class="t " style="left:392px;top:881px;font-size:13px;letter-spacing:-0.2px;color:#2a2a2a">Power Management P...</div>

<!-- tray -->
<svg class="a" style="left:1386px;top:884px" width="5" height="10"><rect x="0.5" y="0" width="4" height="1" fill="#9a9a9a"/><rect x="0.5" y="3" width="4" height="1" fill="#9a9a9a"/><rect x="0.5" y="6" width="4" height="1" fill="#9a9a9a"/></svg>
<svg class="a" style="left:1395px;top:877px" width="23" height="22" viewBox="0 0 23 22">
 <path d="M13 9.5L18.5 4" stroke="#a0a0a0" stroke-width="3.6" stroke-linecap="round"/>
 <path d="M18.5 4L20 2.5" stroke="#a0a0a0" stroke-width="1.6" stroke-linecap="round"/>
 <path d="M3.5 16.5L8 12" stroke="#a0a0a0" stroke-width="3.6" stroke-linecap="round"/>
 <path d="M3.5 16.5L1.5 18.5" stroke="#a0a0a0" stroke-width="1.6" stroke-linecap="round"/>
 <path d="M15.3 15.2l5 5M20.3 15.2l-5 5" stroke="#d8301c" stroke-width="2"/>
</svg>
<svg class="a" style="left:1422px;top:877px" width="18" height="22" viewBox="0 0 18 22">
 <ellipse cx="9" cy="11" rx="8" ry="10.5" fill="#3e78c4"/>
 <path d="M5.3 7.5L12.5 14.5L9 18V4L12.5 7.5L5.3 14.5" fill="none" stroke="#fff" stroke-width="1.4"/>
</svg>
<svg class="a" style="left:1445px;top:879px" width="22" height="18" viewBox="0 0 22 18">
 <path d="M1.9 6.6h2.4l3.5-2.6v9.6l-3.5-2.6H1.9z" fill="#333"/>
 <path d="M11.3 6.4a3 3 0 0 1 0 5" fill="none" stroke="#333" stroke-width="1.5"/>
 <path d="M13.5 4.4a6 6 0 0 1 0 9" fill="none" stroke="#333" stroke-width="1.5"/>
 <path d="M15.8 2a9.4 9.4 0 0 1 0 14" fill="none" stroke="#999" stroke-width="1.2"/>
</svg>
<svg class="a" style="left:1471px;top:880px" width="20" height="15" viewBox="0 0 20 15">
 <rect x="1.9" y="2.9" width="14.2" height="9.9" rx="1" fill="#d0d0d0" stroke="#222" stroke-width="1.6"/>
 <rect x="16.6" y="6.1" width="2" height="3.4" fill="#333"/>
 <path d="M3.6 9.4L9.6 6.2L8.8 8.4L14.4 6.6L8.4 9.8L9.2 7.6z" fill="#222" stroke="#222" stroke-width="0.5"/>
</svg>
<div class="t " style="left:1497px;top:881px;font-size:13px;letter-spacing:-0.47px;color:#222">Tue Sep 13, 18:26</div>
</body></html>
